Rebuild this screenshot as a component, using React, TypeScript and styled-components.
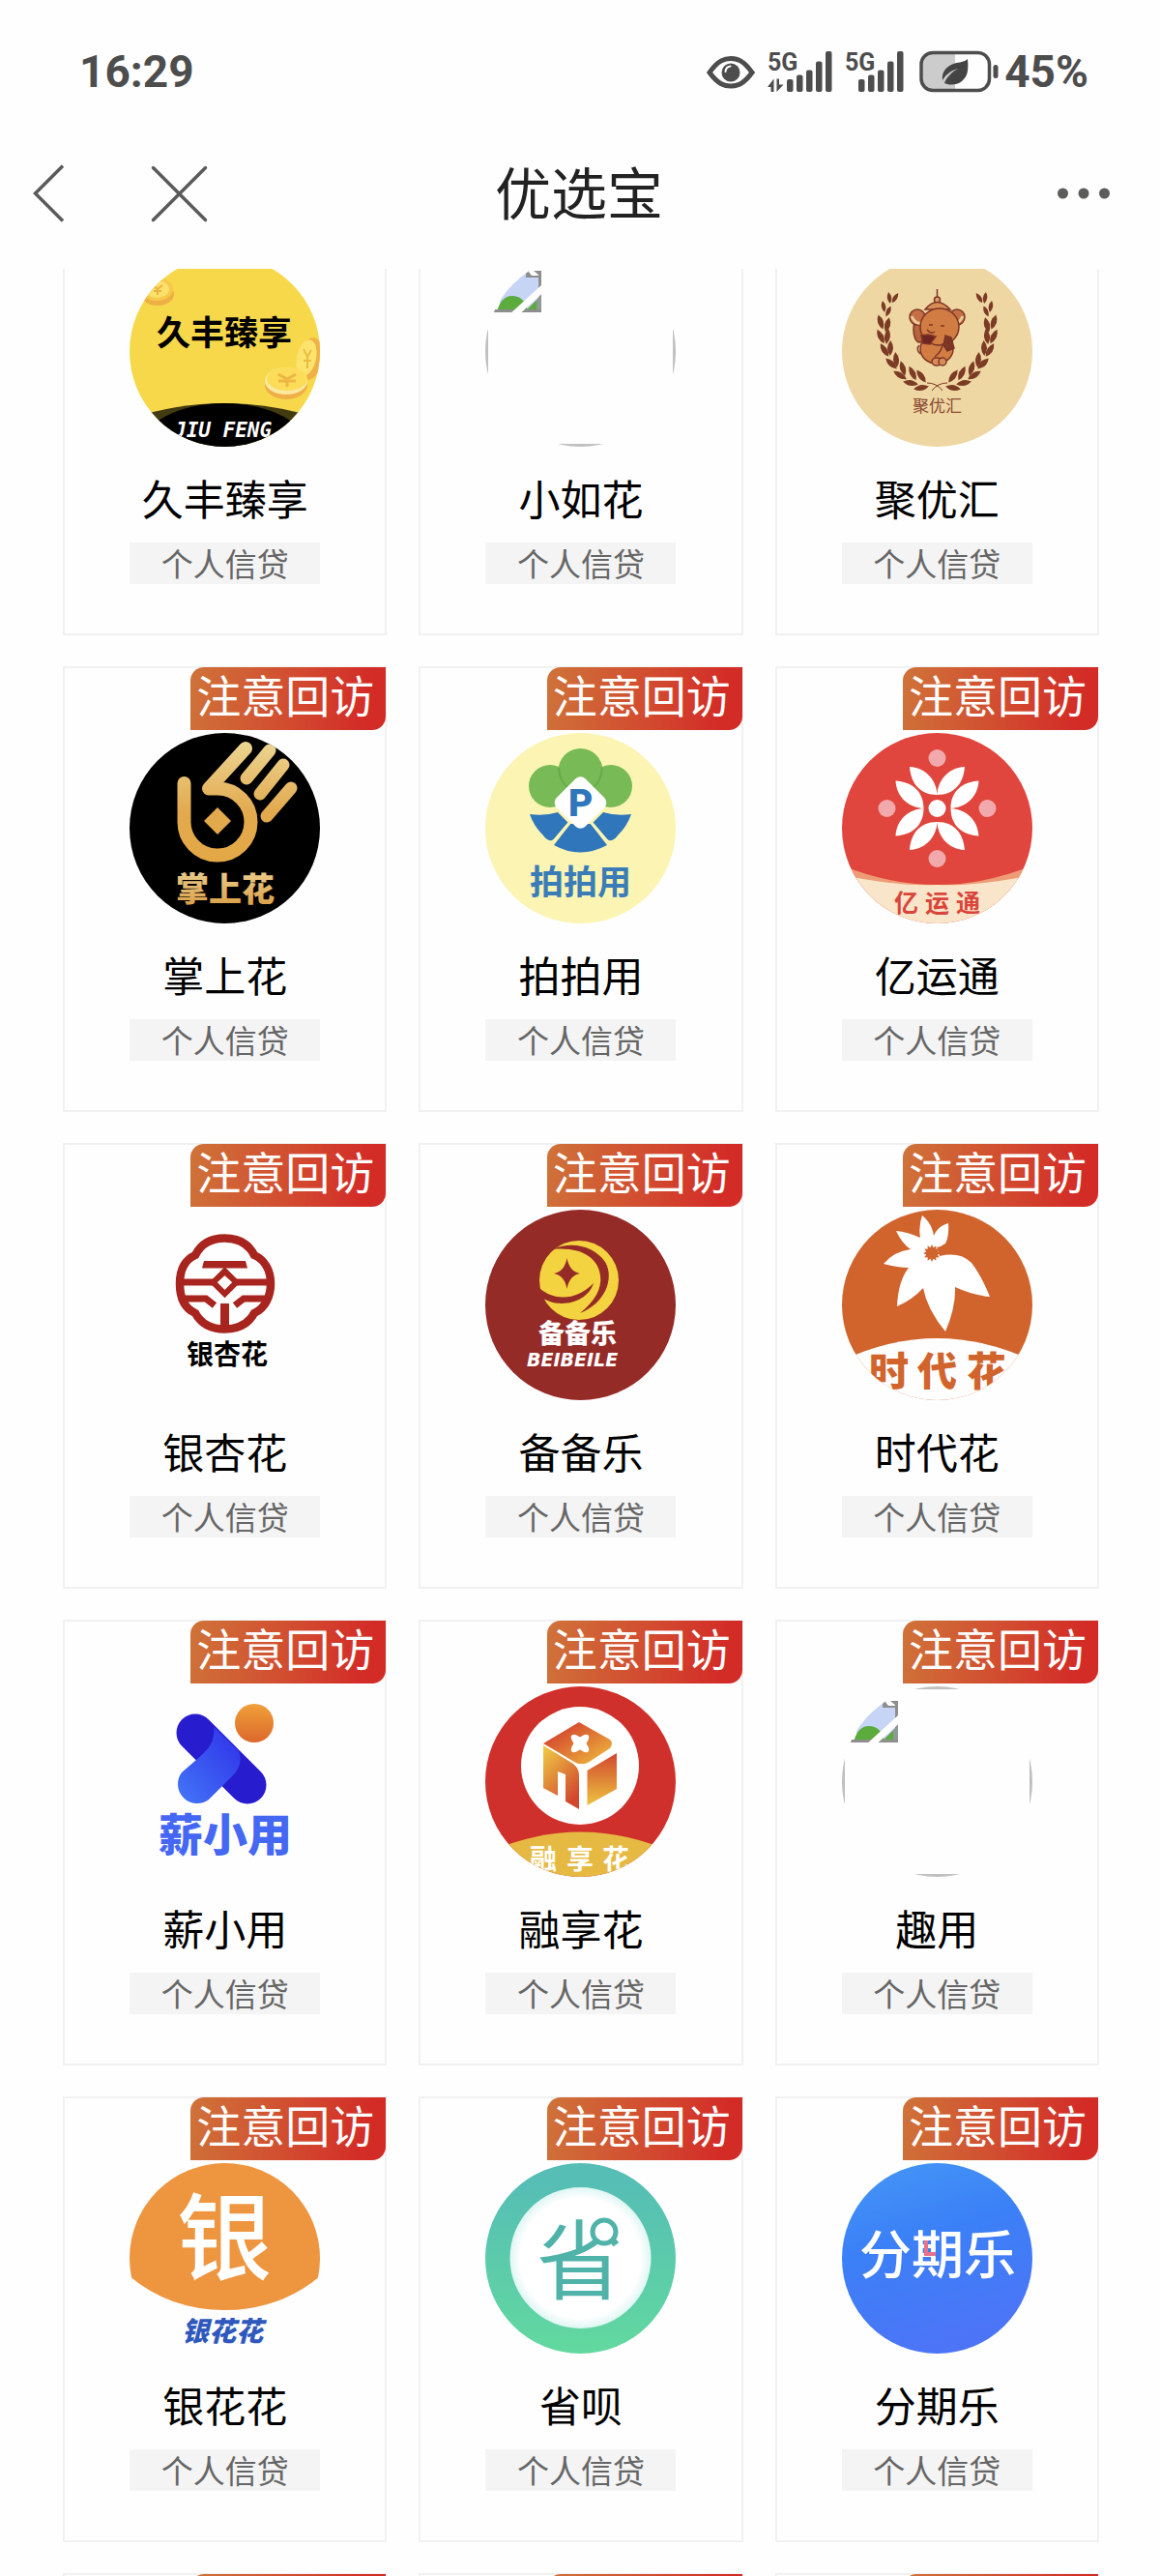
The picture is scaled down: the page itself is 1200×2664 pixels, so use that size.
import React from 'react';
import styled, { createGlobalStyle } from 'styled-components';

const CJK = '"Noto Sans CJK SC", "Noto Sans", sans-serif';

const GlobalStyle = createGlobalStyle`
  * { box-sizing: border-box; }
  body {
    margin: 0;
    background: #fefefe;
    font-family: ${CJK};
    color: #000;
  }
`;

const Screen = styled.div`
  display: flex;
  flex-direction: column;
  height: 100vh;
  overflow: hidden;
`;

/* ---------- status bar ---------- */

const StatusBar = styled.div`
  flex: none;
  display: flex;
  align-items: center;
  justify-content: space-between;
  height: 122px;
  padding: 26px 74px 0 82px;
  color: #4d4d4d;
  font-family: Roboto, "Noto Sans", sans-serif;
  font-size: 46px;
  font-weight: 700;
  line-height: 56px;
`;

const StatusIcons = styled.div`
  display: flex;
  align-items: center;
  gap: 13px;
`;

const BatteryGroup = styled.div`
  display: flex;
  align-items: center;
  gap: 6px;
`;

const Icon = styled.svg`
  display: block;
  flex: none;
  overflow: visible;
`;

function EyeIcon() {
  return (
    <Icon width="50" height="42" viewBox="0 0 50 42" aria-hidden="true">
      <path d="M3 22C12 9 19 7.500 25 7.500S38 9 47 22C38 34.500 31 36 25 36S12 34.500 3 22Z" fill="none" stroke="#4d4d4d" strokeWidth="5" />
      <circle cx="25" cy="22" r="9.500" fill="#4d4d4d" />
      <path d="M19.500 21a6 6 0 0 1 5-5.500" fill="none" stroke="#fefefe" strokeWidth="2" strokeLinecap="round" />
    </Icon>
  );
}

function SignalIcon({ arrows }: { arrows?: boolean }) {
  const w = arrows ? 67 : 61;
  const first = w - 47;
  const tops = [29, 24.5, 19.5, 10.5, 0];
  return (
    <Icon width={w} height="42" viewBox={`0 0 ${w} 42`} aria-hidden="true">
      <text x="0" y="20" fontFamily='"Liberation Sans Narrow", Roboto, sans-serif' fontSize="25" fontWeight="700" fill="#4d4d4d">5G</text>
      {arrows && (
        <path d="M0 37 6.500 28.500V42H3.500V37ZM16.500 34.500 9.500 42V28.500h2.500v6Z" fill="#4d4d4d" />
      )}
      {tops.map((t, i) => (
        <rect key={t} x={first + i * 10} y={t} width="6.500" height={42 - t} rx="2" fill="#4d4d4d" />
      ))}
    </Icon>
  );
}

function BatteryIcon() {
  return (
    <Icon width="85" height="42" viewBox="0 0 85 42" aria-hidden="true">
      <path d="M40 2H18A13 13 0 0 0 5 15v12a13 13 0 0 0 13 13h22Z" fill="#ccc" />
      <rect x="5" y="1.500" width="70.500" height="39" rx="12" fill="none" stroke="#4d4d4d" strokeWidth="3.500" />
      <rect x="79.500" y="14" width="5" height="14" rx="2.500" fill="#4d4d4d" />
      <path d="M53 8c1 12 0 18-6 23-5 4-11 4-15 3l-3-1c2-6 8-12 14-15-8 2-13 7-16 12-1-8 3-13 9-16s13-2 17-6Z" fill="#444" />
    </Icon>
  );
}

/* ---------- navigation bar ---------- */

const NavBar = styled.header`
  flex: none;
  display: grid;
  grid-template-columns: 1fr auto 1fr;
  align-items: center;
  height: 156px;
  padding: 0 50px 0 34px;
`;

const NavActions = styled.div<{ $end?: boolean }>`
  display: flex;
  align-items: center;
  gap: 90px;
  justify-content: ${(p) => (p.$end ? 'flex-end' : 'flex-start')};
`;

const IconButton = styled.button`
  display: block;
  padding: 0;
  border: 0;
  background: none;
  cursor: pointer;
`;

const Title = styled.h1`
  margin: 0;
  padding: 0 0 6px 14px;
  color: #222;
  font-size: 58px;
  font-weight: 400;
  line-height: 84px;
`;

/* ---------- product grid ---------- */

const Viewport = styled.main`
  flex: 1;
  min-height: 0;
  overflow: hidden;
`;

const Grid = styled.ul`
  display: grid;
  grid-template-columns: repeat(3, 1fr);
  gap: 32px 33px;
  margin: -82px 0 0;
  padding: 0 63px 0 65px;
  list-style: none;
`;

const Card = styled.a`
  position: relative;
  display: flex;
  flex-direction: column;
  align-items: center;
  height: 461px;
  padding-top: 67px;
  border: 2px solid #f1f1f1;
  color: #000;
  text-decoration: none;
`;

const Badge = styled.span`
  position: absolute;
  top: -1px;
  right: -1px;
  min-width: 202px;
  height: 65px;
  padding: 0 12px 0 6px;
  border-radius: 14px 0 14px 0;
  background: linear-gradient(100deg, #cf7339 0%, #d2492f 55%, #d32c27 88%);
  color: #fff;
  font-size: 46px;
  line-height: 54px;
  white-space: nowrap;
`;

const LogoSvg = styled.svg`
  display: block;
  flex: none;
  width: 197px;
  height: 197px;
  border-radius: 50%;
  overflow: hidden;
`;

const Name = styled.span`
  margin-top: 23px;
  font-size: 43px;
  line-height: 58px;
`;

const Tag = styled.span`
  width: 197px;
  height: 43px;
  margin-top: 18px;
  background: #f4f4f4;
  color: #666;
  font-size: 33px;
  line-height: 42px;
  text-align: center;
`;

/* ---------- logos ---------- */

type LogoTextProps = {
  x: string;
  y: number;
  size: number;
  fill: string;
  weight?: number;
  italic?: boolean;
  family?: string;
  children: React.ReactNode;
};

function LogoText({ x, y, size, fill, weight = 700, italic, family = CJK, children }: LogoTextProps) {
  return (
    <text x={x} y={y} fontFamily={family} fontSize={size} fontWeight={weight} fontStyle={italic ? 'italic' : 'normal'} fill={fill}>
      {children}
    </text>
  );
}

function Logo({ children }: { children: React.ReactNode }) {
  return <LogoSvg viewBox="0 0 197 197" aria-hidden="true">{children}</LogoSvg>;
}

function JiufengLogo() {
  return (
    <Logo>
      <rect width="197" height="197" fill="#f6d84a" />
      <ellipse cx="29" cy="39" rx="17" ry="12" fill="#ecb044" />
      <ellipse cx="28" cy="34" rx="17" ry="12" fill="#f7c94a" />
      <ellipse cx="28" cy="34" rx="13" ry="9" fill="#fbe06a" />
      <path d="M24 30l5 4 5-4M29 34v6M25 36h8" stroke="#e9b23e" strokeWidth="2" fill="none" />
      <ellipse cx="187" cy="106" rx="13" ry="22" fill="#efb146" transform="rotate(12 187 106)" />
      <ellipse cx="183" cy="105" rx="10" ry="19" fill="#fce36c" transform="rotate(12 183 105)" />
      <path d="M180 96l4 8 4-7M184 104v12M180 108h8" stroke="#ecbb45" strokeWidth="2" fill="none" />
      <ellipse cx="162" cy="133" rx="22" ry="15" fill="#efae47" />
      <ellipse cx="162" cy="129" rx="22" ry="14" fill="#fbe9a0" />
      <ellipse cx="163" cy="127" rx="21" ry="12" fill="#fcdc58" />
      <path d="M154 122l9 5 9-5M163 127v8M154 129h18" stroke="#edb645" strokeWidth="3" fill="none" />
      <path d="M0 168Q98 136 197 168V197H0Z" fill="#433b10" />
      <ellipse cx="98" cy="198" rx="86" ry="46" fill="#000" />
      <LogoText x="28" y={92} size={35} fill="#000">久丰臻享</LogoText>
      <LogoText x="46" y={187} size={21} fill="#fff" italic family='"DejaVu Sans Mono", monospace'>JIU FENG</LogoText>
    </Logo>
  );
}

function BrokenImageLogo() {
  return (
    <Logo>
      <path d="M15 15h43v43H15Z" fill="#c6d4f6" />
      <path d="M15 15h43v7H42v-4H15Z" fill="#8e8e8e" />
      <path d="M44 15l4 5 8 0-6-5Z" fill="#fff" />
      <path d="M55 18h3v40h-3Z" fill="#8e8e8e" />
      <path d="M12 58Q16 41 28 41T44 56Z" fill="#5bab3d" />
      <path d="M40 58 58 40V58Z" fill="#8e9a95" />
      <path d="M44 55 53 46V55Z" fill="#5bab3d" />
      <path d="M8 55h50v3H8Z" fill="#8e8e8e" />
      <path d="M28 62 62 31" stroke="#fefefe" strokeWidth="7" />
      <rect x="1.500" y="1.500" width="194" height="194" fill="none" stroke="#c0c0c0" strokeWidth="3" />
    </Logo>
  );
}

const LEAVES: Array<[number, number, number]> = [
  [49, 43, -8], [43, 52, -10], [40, 68, -18], [40, 83, -26], [44, 97, -32], [51, 111, -46], [60, 123, -58], [71, 131, -80], [82, 136, -100],
  [55, 43, 32], [48, 57, 24], [47, 71, 14], [47, 83, 8], [50, 95, 2], [56, 107, -6], [63, 116, -16], [73, 121, -26], [82, 124, -36],
];

function LaurelBranch() {
  return (
    <g fill="#7b3b25">
      {LEAVES.map(([x, y, r], i) => (
        <path key={i} d="M0-8Q6 0 0 8Q-6 0 0-8Z" transform={`translate(${x} ${y}) rotate(${r}) scale(${i % 9 < 2 ? 0.75 : 1})`} />
      ))}
    </g>
  );
}

function JuyouhuiLogo() {
  return (
    <Logo>
      <rect width="197" height="197" fill="#efd7a4" />
      <LaurelBranch />
      <g transform="translate(197 0) scale(-1 1)"><LaurelBranch /></g>
      <path d="M88 131q10 0 16 8M109 131q-10 0-16 8" fill="none" stroke="#7b3b25" strokeWidth="1" />
      <g stroke="#7d3525" strokeWidth="1.500">
        <path d="M98.500 34v8" />
        <circle cx="98.500" cy="45" r="3" fill="#dca06d" />
        <path d="M86 55Q98 40 112 55Z" fill="#d88d57" />
        <ellipse cx="80" cy="76" rx="6" ry="13" fill="#b5643b" />
        <circle cx="78" cy="63" r="8" fill="#c57044" />
        <circle cx="119" cy="63" r="8" fill="#c57044" />
        <path d="M72 62q4 9 11 7M125 62q-4 9-11 7" fill="none" stroke="#eccb9a" strokeWidth="3" />
        <ellipse cx="98" cy="96" rx="17" ry="15" fill="#d17c43" />
        <ellipse cx="101" cy="73" rx="20" ry="19" fill="#d17c43" />
        <ellipse cx="98" cy="109" rx="5" ry="4" fill="#d88c58" />
        <ellipse cx="104" cy="109" rx="4" ry="4" fill="#d88c58" />
        <path d="M107 82l6 2 3 11-7 3-4-6Z" fill="#7d3525" />
        <path d="M82 82l7-1 8 2-6 8-7-1Z" fill="#6e2420" />
        <path d="M80 92q-4 4 1 9M104 90q0 8-8 14M90 71h4M102 72h4M88 76q4 5 8 2" fill="none" />
      </g>
      <LogoText x="73" y={161} size={17} fill="#8b4a32" weight={400}>聚优汇</LogoText>
    </Logo>
  );
}

function ZhangshanghuaLogo() {
  return (
    <Logo>
      <defs>
        <linearGradient id="gold" gradientUnits="userSpaceOnUse" x1="0" y1="10" x2="0" y2="130">
          <stop offset="0" stopColor="#ecd592" />
          <stop offset=".6" stopColor="#e2a94e" />
          <stop offset="1" stopColor="#e3a846" />
        </linearGradient>
        <linearGradient id="goldText" x1="0" y1="0" x2="0" y2="1">
          <stop offset="0" stopColor="#ecd59a" />
          <stop offset="1" stopColor="#d99a3e" />
        </linearGradient>
      </defs>
      <rect width="197" height="197" fill="#000" />
      <g fill="none" stroke="url(#gold)" strokeLinecap="round" strokeLinejoin="round" strokeWidth="14">
        <path d="M56.500 52V91A34.500 34.500 0 1 0 91 57.500H82L120 16" />
        <g strokeWidth="13">
          <path d="M145 18 121 47M159 33 135 63M167 57 142 86" />
        </g>
      </g>
      <path d="M91 77l14 14-14 14-14-14Z" fill="url(#gold)" />
      <LogoText x="48" y={174} size={34} fill="url(#goldText)" weight={900}>掌上花</LogoText>
    </Logo>
  );
}

function PaipaiyongLogo() {
  return (
    <Logo>
      <rect width="197" height="197" fill="#fbf4b2" />
      <g fill="#78ba56">
        <circle cx="67" cy="55" r="22" />
        <circle cx="130" cy="55" r="22" />
        <circle cx="98.500" cy="39" r="23" />
      </g>
      <path d="M76 36q1 14 9 20M121 36q-1 14-9 20" stroke="#66ab4a" strokeWidth="2" fill="none" />
      <g fill="#2f76bb">
        <path d="M46 84Q62 86 75 82L86 93Q80 106 69 111Q64 112 60 106Q50 96 46 84Z" />
        <path d="M151 84Q135 86 122 82L111 93Q117 106 128 111Q133 112 137 106Q147 96 151 84Z" />
        <path d="M88 94h21L126 116Q98 131 71 116Z" />
      </g>
      <path d="M87 93 70 113M110 93 127 113" stroke="#fbf4b2" strokeWidth="3" />
      <rect x="77.500" y="51" width="42" height="42" rx="7" fill="#fff" transform="rotate(45 98.500 72)" />
      <LogoText x="86" y={86} size={39} fill="#2f76bb" weight={900} family="Roboto, sans-serif">P</LogoText>
      <LogoText x="46" y={167} size={35} fill="#3a7cb8">拍拍用</LogoText>
    </Logo>
  );
}

function YiyuntongLogo() {
  return (
    <Logo>
      <rect width="197" height="197" fill="#e0463d" />
      {[0, 90, 180, 270].map((a) => (
        <g key={a} transform={`rotate(${a} 98.500 78)`}>
          <circle cx="98.500" cy="26" r="9" fill="#f2a9ab" />
          <path d="M98.500 64C98 50 88 36 70 35C71 51 80 64 98.500 64ZM98.500 64C99 50 109 36 127 35C126 51 117 64 98.500 64Z" fill="#fff" />
        </g>
      ))}
      <circle cx="98.500" cy="78" r="9" fill="#fff" />
      <path d="M0 137Q98.500 177 197 137V197H0Z" fill="#ee9c76" />
      <path d="M0 147Q60 159 98.500 157Q137 159 197 147V197H0Z" fill="#f9e5c9" />
      <LogoText x="54 86 118" y={185} size={25} fill="#d9453c">亿运通</LogoText>
    </Logo>
  );
}

function YinxinghuaLogo() {
  return (
    <Logo>
      <g fill="none" stroke="#a8241e" strokeWidth="8.500">
        <path d="M68 47C74 35 84 29.500 98.500 29.500S123 35 129 47C140 52 146 63 146 76.500S140 102 129 107C123 118 113 123.500 98.500 123.500S74 118 68 107C57 102 52 91 52 76.500S57 52 68 47Z" />
        <path d="M98.500 64 110.500 75 98.500 87 86.500 75Z" strokeWidth="6" />
        <path d="M53 75H86M111 75H145" strokeWidth="7" />
        <path d="M54 92H79L88 99M143 92H118L109 99" strokeWidth="7" />
        <path d="M98.500 97V124" strokeWidth="9" />
      </g>
      <path d="M77 53H120L122 60.500H75Z" fill="#a8241e" />
      <path d="M89 69 98.500 59 108 69 104 71 98.500 66 93 71Z" fill="#a8241e" />
      <LogoText x="59" y={160} size={28} fill="#000">银杏花</LogoText>
    </Logo>
  );
}

function BeibeileLogo() {
  return (
    <Logo>
      <rect width="197" height="197" fill="#952b27" />
      <circle cx="97" cy="73" r="41" fill="#f3d33f" />
      <path d="M50 56Q62 38 76 38Q66 42 60 50L55 66 50 74Z" fill="#952b27" />
      <path d="M70 41C90 32 113 38 124 54C134 71 124 97 98 107C113 95 121 82 119 68C117 50 99 38 70 41Z" fill="#952b27" />
      <path d="M53 78C66 93 92 97 112 76C106 97 72 105 54 87Z" fill="#952b27" />
      <path d="M84.500 50Q87 64 98 66Q87 68 84.500 82Q82 68 71 66Q82 64 84.500 50Z" fill="#952b27" />
      <LogoText x="55" y={138} size={27} fill="#fff" weight={900}>备备乐</LogoText>
      <LogoText x="43" y={162} size={19} fill="#fff" italic family='"DejaVu Sans", sans-serif'>BEIBEILE</LogoText>
    </Logo>
  );
}

function ShidaihuaLogo() {
  const teeth = Array.from({ length: 24 }, (_, i) => {
    const r = i % 2 ? 6 : 9;
    const a = (i * Math.PI) / 12;
    return `${93 + r * Math.cos(a)},${45 + r * Math.sin(a)}`;
  }).join(' ');
  return (
    <Logo>
      <rect width="197" height="197" fill="#d1642d" />
      <path
        d="M83 6Q93 14 95 27Q99 17 110 14Q111 28 107 35Q103 38 98 39L101 48Q122 43 134 55Q144 68 153 90Q134 88 117 80Q118 100 107 126Q88 103 84 81Q73 93 57 100Q58 74 69 60Q58 60 43 56Q54 43 71 41Q62 35 56 22Q68 23 81 29Q79 17 83 6Z"
        fill="#fff"
      />
      <polygon points={teeth} fill="#d1642d" />
      <path d="M-2 157Q98.500 109 199 157V199H-2Z" fill="#fefefe" />
      <LogoText x="28 78 129" y={182} size={41} fill="#d1642d" weight={900}>时代花</LogoText>
    </Logo>
  );
}

function XinxiaoyongLogo() {
  return (
    <Logo>
      <defs>
        <linearGradient id="sun" x1="0" y1="0" x2="0" y2="1">
          <stop offset="0" stopColor="#f0a03a" />
          <stop offset="1" stopColor="#dc682c" />
        </linearGradient>
        <linearGradient id="stroke" x1="0" y1="1" x2="1" y2="0">
          <stop offset="0" stopColor="#4377f8" />
          <stop offset="1" stopColor="#2e2fe8" />
        </linearGradient>
      </defs>
      <circle cx="129" cy="38" r="20" fill="url(#sun)" />
      <path d="M68 48 122 102" stroke="#281ccf" strokeWidth="39" strokeLinecap="round" />
      <path d="M54 89 69 76C82 65 88 58 87.500 42L113 67C117 78 113 86 106 93L82 117A20 20 0 0 1 54 89Z" fill="url(#stroke)" />
      <LogoText x="30" y={170} size={46} fill="#4467f4" weight={900}>薪小用</LogoText>
    </Logo>
  );
}

function RongxianghuaLogo() {
  return (
    <Logo>
      <defs>
        <linearGradient id="roof" x1="0" y1="0" x2="1" y2="1">
          <stop offset=".2" stopColor="#d5482d" />
          <stop offset="1" stopColor="#efc23f" />
        </linearGradient>
        <linearGradient id="wallLeft" x1="0" y1="0" x2=".6" y2="1">
          <stop offset="0" stopColor="#f0cf45" />
          <stop offset="1" stopColor="#d2472e" />
        </linearGradient>
        <linearGradient id="wallRight" x1="0" y1="0" x2="0" y2="1">
          <stop offset="0" stopColor="#d2472e" />
          <stop offset="1" stopColor="#edc240" />
        </linearGradient>
      </defs>
      <rect width="197" height="197" fill="#d0302b" />
      <circle cx="98" cy="82" r="61" fill="#fff" />
      <path d="M97 37 129 55Q133 59 129 64L106 79Q98 82 92 78L60 59Z" fill="url(#roof)" />
      <path d="M60 61 91 80Q97 85 97 92V127L83 119V91L75 88V113L60 105Z" fill="url(#wallLeft)" />
      <path d="M105.500 87 136 69V106L105.500 123Z" fill="url(#wallRight)" />
      <g fill="#fff" transform="rotate(45 98 59)">
        <ellipse cx="98" cy="59" rx="12" ry="5" />
        <ellipse cx="98" cy="59" rx="5" ry="12" />
      </g>
      <path d="M0 173Q98.500 128 197 173V197H0Z" fill="#e6b942" />
      <LogoText x="46 84 121" y={189} size={28} fill="#fff">融享花</LogoText>
    </Logo>
  );
}

function YinhuahuaLogo() {
  return (
    <Logo>
      <path d="M0 0H197V117Q155 152 98.500 152T0 117Z" fill="#ee9540" />
      <LogoText x="49" y={113} size={98} fill="#fff" weight={500}>银</LogoText>
      <LogoText x="54" y={184} size={28} fill="#2f58bd" weight={900} italic>银花花</LogoText>
    </Logo>
  );
}

function ShengbeiLogo() {
  return (
    <Logo>
      <defs>
        <linearGradient id="ring" x1="0" y1="0" x2="0" y2="1">
          <stop offset=".1" stopColor="#56beb5" />
          <stop offset="1" stopColor="#62d99f" />
        </linearGradient>
        <radialGradient id="dish">
          <stop offset=".85" stopColor="#fff" />
          <stop offset="1" stopColor="#def6f3" />
        </radialGradient>
      </defs>
      <rect width="197" height="197" fill="url(#ring)" />
      <circle cx="98.500" cy="98" r="73" fill="url(#dish)" />
      <LogoText x="53" y={134} size={90} fill="#4fb3aa" weight={400}>省</LogoText>
      <circle cx="123" cy="71" r="12" fill="#fff" stroke="#4fb3aa" strokeWidth="5" />
    </Logo>
  );
}

function FenqileLogo() {
  return (
    <Logo>
      <defs>
        <linearGradient id="sky" x1=".2" y1="0" x2=".5" y2="1">
          <stop offset="0" stopColor="#4495f6" />
          <stop offset=".4" stopColor="#3b80f7" />
          <stop offset="1" stopColor="#4d74f6" />
        </linearGradient>
      </defs>
      <rect width="197" height="197" fill="url(#sky)" />
      <LogoText x="18" y={115} size={54} fill="#fff" weight={500}>分期乐</LogoText>
      <path d="M87 80V94H97" fill="none" stroke="#e9718c" strokeWidth="4" />
    </Logo>
  );
}

/* ---------- data ---------- */

type Product = { name: string; logo: React.ComponentType; revisit?: boolean };

const PRODUCTS: Product[] = [
  { name: '久丰臻享', logo: JiufengLogo },
  { name: '小如花', logo: BrokenImageLogo },
  { name: '聚优汇', logo: JuyouhuiLogo },
  { name: '掌上花', logo: ZhangshanghuaLogo, revisit: true },
  { name: '拍拍用', logo: PaipaiyongLogo, revisit: true },
  { name: '亿运通', logo: YiyuntongLogo, revisit: true },
  { name: '银杏花', logo: YinxinghuaLogo, revisit: true },
  { name: '备备乐', logo: BeibeileLogo, revisit: true },
  { name: '时代花', logo: ShidaihuaLogo, revisit: true },
  { name: '薪小用', logo: XinxiaoyongLogo, revisit: true },
  { name: '融享花', logo: RongxianghuaLogo, revisit: true },
  { name: '趣用', logo: BrokenImageLogo, revisit: true },
  { name: '银花花', logo: YinhuahuaLogo, revisit: true },
  { name: '省呗', logo: ShengbeiLogo, revisit: true },
  { name: '分期乐', logo: FenqileLogo, revisit: true },
];

const PENDING = [0, 1, 2];

export default function App() {
  return (
    <Screen>
      <GlobalStyle />
      <StatusBar>
        <span>16:29</span>
        <StatusIcons>
          <EyeIcon />
          <SignalIcon arrows />
          <SignalIcon />
          <BatteryGroup>
            <BatteryIcon />
            <span>45%</span>
          </BatteryGroup>
        </StatusIcons>
      </StatusBar>
      <NavBar>
        <NavActions>
          <IconButton type="button" aria-label="返回">
            <Icon width="33" height="60" viewBox="0 0 33 60">
              <path d="M31 1.500 2.500 30 31 58.500" fill="none" stroke="#5a5a5a" strokeWidth="3.500" />
            </Icon>
          </IconButton>
          <IconButton type="button" aria-label="关闭">
            <Icon width="57" height="57" viewBox="0 0 57 57">
              <path d="M1.500 1.500 55.500 55.500M55.500 1.500 1.500 55.500" stroke="#5a5a5a" strokeWidth="3.500" strokeLinecap="round" />
            </Icon>
          </IconButton>
        </NavActions>
        <Title>优选宝</Title>
        <NavActions $end>
          <IconButton type="button" aria-label="更多">
            <Icon width="57" height="12" viewBox="0 0 57 12">
              <g fill="#5c5c5a">
                <circle cx="6.500" cy="6" r="5.500" />
                <circle cx="28" cy="6" r="5.500" />
                <circle cx="49.500" cy="6" r="5.500" />
              </g>
            </Icon>
          </IconButton>
        </NavActions>
      </NavBar>
      <Viewport>
        <Grid>
          {PRODUCTS.map(({ name, logo: ProductLogo, revisit }) => (
            <li key={name}>
              <Card href="#">
                {revisit && <Badge>注意回访</Badge>}
                <ProductLogo />
                <Name>{name}</Name>
                <Tag>个人信贷</Tag>
              </Card>
            </li>
          ))}
          {PENDING.map((n) => (
            <li key={n}>
              <Card as="div"><Badge /></Card>
            </li>
          ))}
        </Grid>
      </Viewport>
    </Screen>
  );
}
